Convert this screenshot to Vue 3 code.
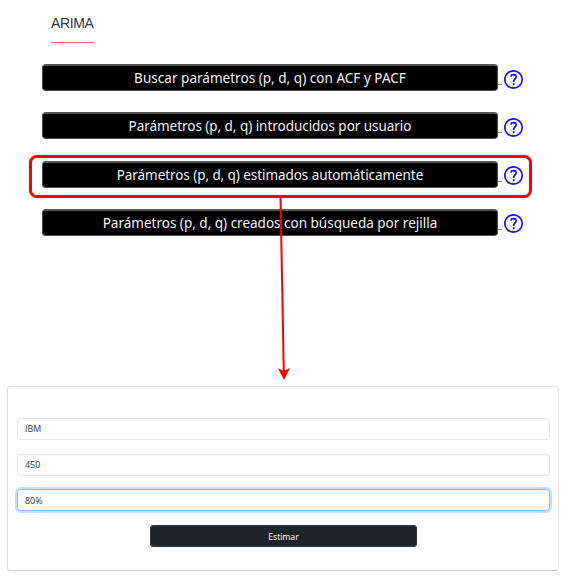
<script setup>
const options = [
  { id: 'acf', label: 'Buscar parámetros (p, d, q) con ACF y PACF' },
  { id: 'user', label: 'Parámetros (p, d, q) introducidos por usuario' },
  { id: 'auto', label: 'Parámetros (p, d, q) estimados automáticamente' },
  { id: 'grid', label: 'Parámetros (p, d, q) creados con búsqueda por rejilla' },
]
</script>

<template>
  <main class="page">
    <h1 class="title">ARIMA</h1>

    <section class="options">
      <div v-for="option in options" :key="option.id" class="option">
        <button :class="['option-button', option.id]">{{ option.label }}</button>
        <a class="help">
          <span class="link-space"></span>
          <svg class="help-icon" viewBox="0 0 24 24" aria-hidden="true">
            <circle cx="12" cy="12" r="9.1" />
            <path d="M9.4 9.2C9.4 7.6 10.6 6.8 12.1 6.8C13.7 6.8 14.8 7.8 14.8 9.2C14.8 11.3 12.1 11.6 12.1 14.5M12.1 16V18" />
          </svg>
        </a>
      </div>
    </section>

    <section class="panel">
      <div class="field">IBM</div>
      <div class="field">450</div>
      <div class="field focused">80%</div>
      <button class="submit">Estimar</button>
    </section>

    <svg class="annotation" viewBox="0 0 569 580" aria-hidden="true">
      <rect x="30.5" y="156.5" width="500" height="40" rx="6" />
      <path class="line" d="M280.5 197L283.8 372" />
      <path class="head" d="M284.1 380L278 368.3L283.8 371L290 368Z" />
    </svg>
  </main>
</template>

<style>
body {
  margin: 0;
  background: #fff;
}
</style>

<style scoped>
.page {
  position: relative;
  box-sizing: border-box;
  width: 569px;
  height: 580px;
  padding: 14px 10px 9px 7px;
  display: flex;
  flex-direction: column;
  align-items: flex-start;
  overflow: hidden;
  font-family: "Open Sans", "Noto Sans", sans-serif;
}
.title {
  box-sizing: border-box;
  width: 43px;
  height: 29px;
  margin: 0 0 0 44px;
  border-bottom: 1px solid #ff6c6c;
  font: 400 14px/18px "Liberation Sans", sans-serif;
  letter-spacing: -0.35px;
  color: #31333f;
}
.options {
  display: flex;
  flex-direction: column;
  gap: 21.3px;
  margin: 21px 0 0 35px;
}
.option {
  display: flex;
  height: 27px;
}
.option-button {
  box-sizing: border-box;
  width: 456px;
  height: 27px;
  padding: 1px 0 0;
  border: 1px solid #4d4d4d;
  border-top: 2px solid #555;
  border-radius: 4px;
  background: #000;
  color: #f2f2f2;
  font: 400 13.5px/23px "Noto Sans", sans-serif;
  white-space: nowrap;
}
.acf {
  letter-spacing: 0.03px;
}
.user {
  letter-spacing: -0.04px;
}
.auto {
  letter-spacing: -0.07px;
}
.help {
  display: flex;
  align-items: center;
}
.link-space {
  align-self: flex-start;
  width: 4px;
  height: 1px;
  margin-top: 20px;
  background: #3391ff;
}
.help-icon {
  width: 23px;
  height: 23px;
  margin-top: 3px;
  fill: none;
  stroke: #1414ff;
  stroke-width: 1.8;
}
.panel {
  box-sizing: border-box;
  width: 552px;
  height: 185px;
  margin-top: auto;
  padding: 31px 8px 0 9px;
  border: 1px solid #e7e7e7;
  border-bottom-color: #d0d0d0;
  border-left-color: #dcdcdc;
  border-radius: 4px;
  display: flex;
  flex-direction: column;
  gap: 13.7px;
}
.field {
  box-sizing: border-box;
  height: 22px;
  padding-left: 7px;
  border: 1px solid #e6e9ec;
  border-radius: 4px;
  color: #343a40;
  font-size: 8.9px;
  line-height: 20px;
}
.focused {
  border-color: #8dbdff;
  box-shadow: 0 0 0 2px #c3dbff;
  line-height: 22px;
}
.submit {
  align-self: center;
  width: 267px;
  height: 22px;
  padding: 1px 0 0;
  border: 1px solid #343a3c;
  border-radius: 3px;
  background: #212529;
  color: #f4f4f4;
  font: 400 8.7px/20px "Noto Sans", sans-serif;
  letter-spacing: -0.1px;
}
.annotation {
  position: absolute;
  inset: 0;
  width: 569px;
  height: 580px;
  pointer-events: none;
}
.annotation rect {
  fill: none;
  stroke: #f00;
  stroke-width: 3;
}
.line {
  fill: none;
  stroke: #f00;
  stroke-width: 2;
}
.head {
  fill: #f00;
}
</style>
